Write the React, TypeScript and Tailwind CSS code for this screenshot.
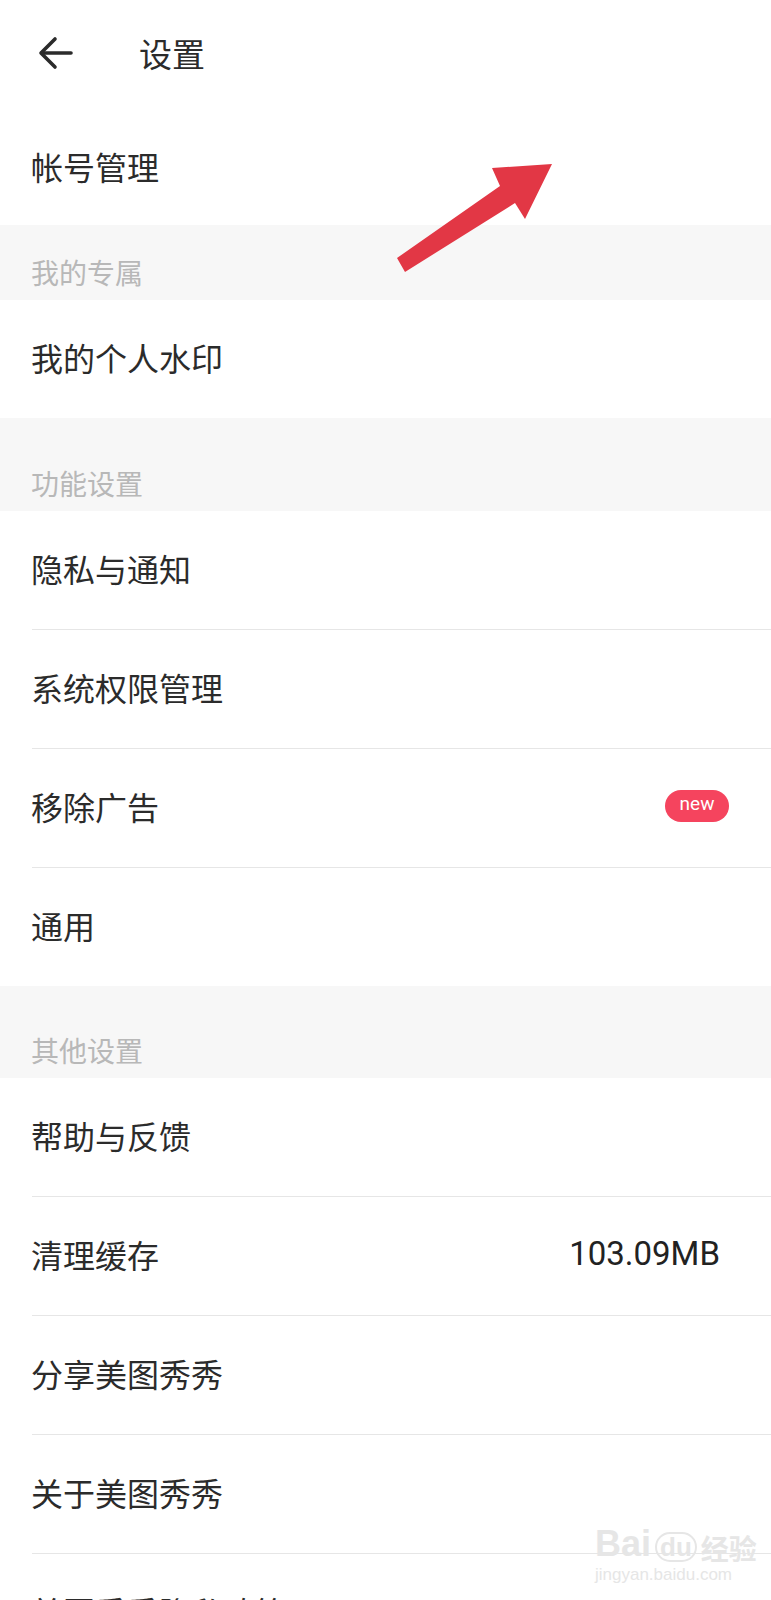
const font = { fontFamily: '"Noto Sans CJK SC", "Noto Sans", sans-serif' };

const Row = ({ label, right }: { label: string; right?: React.ReactNode }) => (
  <div className="h-[118px] flex items-center justify-between pl-[31px] pr-[51px] pb-[5px]">
    <span className="text-[32px] text-[#2b2b2b] leading-none">{label}</span>
    {right}
  </div>
);

const Divider = () => <div className="ml-[32px] h-px bg-[#e6e6e6]" />;

const Band = ({ label, h }: { label: string; h: string }) => (
  <div className={`${h} bg-[#f7f7f7] flex items-end pl-[31px] pb-[14px]`}>
    <span className="text-[28px] text-[#b8b8b8] leading-none">{label}</span>
  </div>
);

export default function App() {
  return (
    <div className="relative w-[771px] h-[1600px] overflow-hidden bg-white" style={font}>
      {/* header */}
      <div className="h-[110px] flex items-center pb-[4px]">
        <svg className="ml-[38px]" width="36" height="36" viewBox="0 0 36 36" fill="none" stroke="#2b2b2b" strokeWidth="3.6" strokeLinecap="round" strokeLinejoin="round">
          <path d="M33 18H4" />
          <path d="M17 4L3 18l14 14" />
        </svg>
        <span className="ml-[65px] text-[33px] text-[#2b2b2b] leading-none">设置</span>
      </div>

      <div className="h-[115px] flex items-center pl-[31px] pb-[4px]">
        <span className="text-[32px] text-[#2b2b2b] leading-none">帐号管理</span>
      </div>

      <Band label="我的专属" h="h-[75px]" />
      <Row label="我的个人水印" />

      <Band label="功能设置" h="h-[93px]" />
      <Row label="隐私与通知" />
      <Divider />
      <Row label="系统权限管理" />
      <Divider />
      <Row
        label="移除广告"
        right={
          <span
            className="mr-[-9px] w-[64px] h-[32px] rounded-full bg-[#f5445e] text-white text-[19px] flex items-center justify-center pb-[2px]"
            style={{ fontFamily: 'Roboto, "Noto Sans", sans-serif' }}
          >
            new
          </span>
        }
      />
      <Divider />
      <Row label="通用" />

      <Band label="其他设置" h="h-[92px]" />
      <Row label="帮助与反馈" />
      <Divider />
      <Row
        label="清理缓存"
        right={
          <span className="text-[33px] text-[#222] leading-none" style={{ fontFamily: 'Roboto, "Noto Sans", sans-serif' }}>
            103.09MB
          </span>
        }
      />
      <Divider />
      <Row label="分享美图秀秀" />
      <Divider />
      <Row label="关于美图秀秀" />
      <Divider />
      <Row label="美图秀秀隐私政策" />

      {/* red annotation arrow */}
      <svg className="absolute left-0 top-0" width="771" height="300" viewBox="0 0 771 300">
        <polygon points="397,258 500,186 492,168 552,164 525,219 515,203 405,272" fill="#e23745" />
      </svg>

      {/* watermark */}
      <div className="absolute left-[595px] top-[1526px] flex flex-col items-start leading-none text-[#e6e6e6]">
        <div className="flex items-end" style={{ fontFamily: '"Liberation Sans", sans-serif' }}>
          <span className="text-[36px] font-bold">Bai</span>
          <span className="text-[26px] font-bold ml-[4px] px-[3px] rounded-full border-2 border-[#e6e6e6]">du</span>
          <span className="text-[28px] font-bold ml-[4px]" style={font}>经验</span>
        </div>
        <span className="text-[17px] mt-[4px]" style={{ fontFamily: '"Liberation Sans", sans-serif' }}>jingyan.baidu.com</span>
      </div>
    </div>
  );
}
